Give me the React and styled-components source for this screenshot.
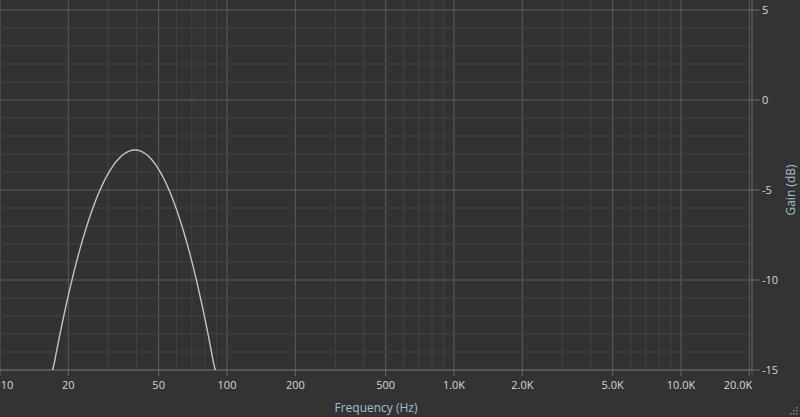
import React from "react";
import styled, { createGlobalStyle } from "styled-components";

const G = createGlobalStyle`
  html,body{margin:0;padding:0;background:#333333;overflow:hidden;}
  *{box-sizing:border-box;}
`;
const Page = styled.div`
  width:800px;height:417px;background:#333333;position:relative;
  font-family:"Segoe UI","Open Sans","Noto Sans",sans-serif;
`;
const Chart = styled.svg`display:block;`;
const XTitle = styled.div`
  position:absolute;left:0;right:48px;bottom:1px;text-align:center;
  color:#9fc0d2;font-size:12px;
`;
const Grip = styled.svg`position:absolute;right:2px;bottom:2px;`;

const W = 752, H = 370, DEC = 227;
const xf = f => DEC * Math.log10(f / 10);
const yd = d => 100 - d * 18;

export default function App() {
  const v = [];
  for (let dec = 10; dec <= 10000; dec *= 10)
    for (let m = 1; m <= 9; m++) {
      const f = dec * m;
      const x = xf(f);
      if (x > W) continue;
      const major = m === 1 || m === 2 || m === 5;
      v.push(<line key={"v" + f} x1={x} x2={x} y1={0} y2={H} stroke={major ? "#5c5c5c" : "#434343"} strokeWidth="1" />);
    }
  const h = [];
  for (let d = 5; d >= -15; d--) {
    const y = yd(d);
    const major = d % 5 === 0;
    h.push(<line key={"h" + d} x1={0} x2={W} y1={y} y2={y} stroke={major ? "#5c5c5c" : "#434343"} />);
  }
  const pts = [];
  for (let x = 40; x <= 230; x += 2) {
    const dx = x - 135;
    const k = dx < 0 ? 0.0327 : 0.0345;
    const y = 150 + k * dx * dx;
    pts.push(`${x},${Math.min(y, 372).toFixed(1)}`);
  }
  const xl = [[10,"10"],[20,"20"],[50,"50"],[100,"100"],[200,"200"],[500,"500"],[1000,"1.0K"],[2000,"2.0K"],[5000,"5.0K"],[10000,"10.0K"],[20000,"20.0K"]];
  const yl = [5,0,-5,-10,-15];
  return (
    <Page>
      <G />
      <Chart width="800" height="395">
        <defs><clipPath id="c"><rect x="0" y="0" width={W} height={H} /></clipPath></defs>
        <rect x="0" y="0" width={W} height={H} fill="#323232" />
        {v}{h}
        <line x1={W} x2={W} y1={0} y2={H + 4} stroke="#6a6a6a" />
        <line x1={0} x2={W} y1={H} y2={H} stroke="#6a6a6a" />
        <polyline points={pts.join(" ")} fill="none" stroke="#c4c4c4" strokeWidth="1.4" clipPath="url(#c)" />
        {yl.map(d => (
          <g key={d}>
            <line x1={W} x2={W + 8} y1={yd(d)} y2={yd(d)} stroke="#6a6a6a" />
            <text x={W + 10} y={yd(d) + 4} fill="#d8d8d8" fontSize="11" fontFamily="Open Sans, sans-serif">{d}</text>
          </g>
        ))}
        {xl.map(([f, t]) => (
          <g key={f}>
            <line x1={xf(f)} x2={xf(f)} y1={H} y2={H + 6} stroke="#6a6a6a" />
            <text x={Math.min(Math.max(xf(f), 7), 738)} y={H + 19} fill="#d8d8d8" fontSize="11" textAnchor="middle" fontFamily="Open Sans, sans-serif">{t}</text>
          </g>
        ))}
        <text transform="translate(795,190) rotate(-90)" fill="#9fc0d2" fontSize="12" textAnchor="middle" fontFamily="Open Sans, sans-serif">Gain (dB)</text>
      </Chart>
      <XTitle>Frequency (Hz)</XTitle>
      <Grip width="10" height="10">
        {[[8,2],[8,5],[5,5],[8,8],[5,8],[2,8]].map(([x,y],i)=>(<rect key={i} x={x} y={y} width="1.5" height="1.5" fill="#8a8a8a" />))}
      </Grip>
    </Page>
  );
}
